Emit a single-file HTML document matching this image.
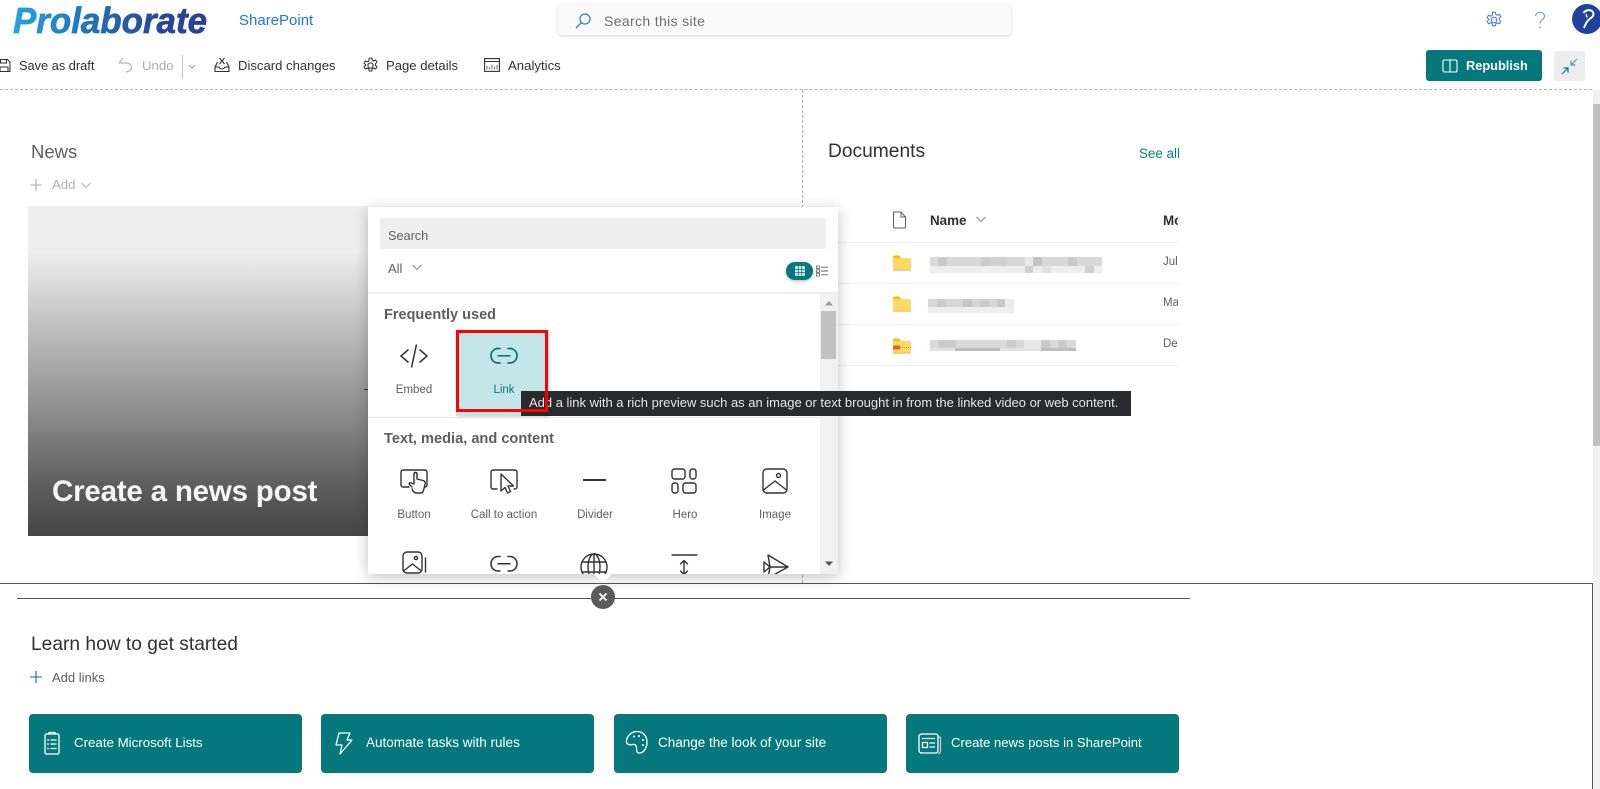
<!DOCTYPE html>
<html><head><meta charset="utf-8"><title>SharePoint</title>
<style>
html,body{margin:0;padding:0;background:#fff;overflow:hidden}
#p{position:relative;width:1600px;height:789px;overflow:hidden;font-family:"Liberation Sans",sans-serif;color:#323130}
.t{position:absolute;white-space:nowrap;line-height:20px;height:20px}
.a{position:absolute}
svg{position:absolute;overflow:visible}
.i{fill:none;stroke:#323130;stroke-width:1.4;stroke-linecap:round;stroke-linejoin:round}
.w{fill:none;stroke:#fff;stroke-width:1.3;stroke-linecap:round;stroke-linejoin:round}
.lb{font-size:11.5px;color:#605e5c;text-align:center;width:90px}
.btn{position:absolute;top:714px;height:59px;width:273px;background:#04787c;border-radius:4px}
.bt{position:absolute;top:19px;color:#fff;line-height:20px;white-space:nowrap}
</style></head><body><div id="p">

<!-- header -->
<svg style="left:0;top:0" width="220" height="44" viewBox="0 0 220 44"><defs><linearGradient id="lg" x1="13" x2="207" y1="0" y2="0" gradientUnits="userSpaceOnUse"><stop offset="0" stop-color="#27a3e0"/><stop offset=".35" stop-color="#1f78bd"/><stop offset=".75" stop-color="#27479b"/><stop offset="1" stop-color="#2a3f95"/></linearGradient></defs><text x="13" y="33" font-family="Liberation Sans" font-size="36" font-weight="bold" font-style="italic" fill="url(#lg)" stroke="url(#lg)" stroke-width=".7" textLength="194" lengthAdjust="spacingAndGlyphs">Prolaborate</text></svg>
<div class="t" style="left:239px;top:11px;font-size:15px;color:#1b7bd6">SharePoint</div>
<div class="a" style="left:558px;top:4px;width:453px;height:31px;background:#fafafa;border-radius:4px;box-shadow:0 1px 3px rgba(0,0,0,.18)"></div>
<svg style="left:574px;top:12px" width="18" height="18" viewBox="0 0 18 18"><circle cx="11" cy="7" r="5" fill="none" stroke="#3a78c4" stroke-width="1.2"/><path d="M7.400 10.600 2 16" stroke="#3a78c4" stroke-width="1.3" fill="none"/></svg>
<div class="t" style="left:604px;top:11px;font-size:14px;color:#706e6c;letter-spacing:.35px">Search this site</div>
<svg style="left:1485px;top:11px" width="18" height="18" viewBox="0 0 18 18"><circle cx="9" cy="9" r="2.800" fill="none" stroke="#4f7fd6" stroke-width="1.100"/><path d="M7.600 1.200h2.800l.4 2.200 1.600.8 2-1 1.500 2.400-1.700 1.500v1.800l1.700 1.500-1.500 2.400-2-1-1.600.8-.4 2.200H7.600l-.4-2.200-1.600-.8-2 1-1.500-2.400 1.700-1.500V8.100L2.100 6.600l1.500-2.400 2 1 1.600-.8z" fill="none" stroke="#4f7fd6" stroke-width="1.100" stroke-linejoin="round"/></svg>
<svg style="left:1533px;top:11px" width="14" height="20" viewBox="0 0 14 20"><path d="M2.500 5C2.800 2.500 4.800 1.200 7 1.200c2.500 0 4.500 1.700 4.500 4 0 3.300-4.300 3.500-4.300 7.300" fill="none" stroke="#6b9be6" stroke-width="1.200"/><circle cx="7.200" cy="16.500" r=".9" fill="#6b9be6"/></svg>
<div class="a" style="left:1572px;top:4px;width:30px;height:30px;border-radius:50%;background:#21429a"></div>
<svg style="left:1580px;top:8px" width="20" height="24" viewBox="0 0 20 24"><path d="M3.500 5C5 2.500 8.500 1.500 11 2.500c3 1.200 3 4.500 1.300 6.300C10.500 10.500 7 11.500 4 20" fill="none" stroke="#fff" stroke-width="2"/><path d="M6.500 6c-.5 1.500 0 2.800 1 3.300" fill="none" stroke="#fff" stroke-width="1.200"/></svg>

<!-- toolbar -->
<svg style="left:-3px;top:58px" width="14" height="15" viewBox="0 0 14 15"><path d="M1 1.500h9.500L13 4v9.500H1zM3.500 1.500V5h6V1.500M3 13.500V9h8v4.500" class="i" style="stroke-width:1.100"/></svg>
<div class="t" style="left:19px;top:56px;font-size:12.800px">Save as draft</div>
<svg style="left:118px;top:56px" width="16" height="18" viewBox="0 0 16 18"><path d="M1 7l4-5M1 7h7c4 0 6 2.500 5.500 5-.5 2.300-3 3.500-5.500 4" fill="none" stroke="#b5b3b1" stroke-width="1.200"/></svg>
<div class="t" style="left:142px;top:56px;font-size:13.200px;color:#b0aeac">Undo</div>
<div class="a" style="left:182px;top:55px;width:1px;height:24px;background:#c8c6c4"></div>
<svg style="left:187px;top:64px" width="10" height="6" viewBox="0 0 10 6"><path d="M2 1l3 3 3-3" fill="none" stroke="#a19f9d" stroke-width="1"/></svg>
<svg style="left:214px;top:57px" width="16" height="16" viewBox="0 0 16 16"><path d="M1 10l2.500-5M15 10l-2.500-5M1 10v4.500h14V10h-4c-.5 1.500-1.500 2-3 2s-2.500-.5-3-2zM5.500 1l5 6M10.500 1l-5 6" fill="none" stroke="#323130" stroke-width="1.100"/></svg>
<div class="t" style="left:238px;top:56px;font-size:13.100px">Discard changes</div>
<svg style="left:362px;top:57px" width="17" height="17" viewBox="0 0 18 18"><circle cx="9" cy="9" r="2.800" fill="none" stroke="#323130" stroke-width="1.100"/><path d="M7.600 1.200h2.800l.4 2.200 1.600.8 2-1 1.500 2.400-1.700 1.500v1.800l1.700 1.500-1.500 2.400-2-1-1.600.8-.4 2.200H7.600l-.4-2.200-1.600-.8-2 1-1.500-2.400 1.700-1.500V8.100L2.100 6.600l1.500-2.400 2 1 1.600-.8z" fill="none" stroke="#323130" stroke-width="1.100" stroke-linejoin="round"/></svg>
<div class="t" style="left:386px;top:56px;font-size:13.100px">Page details</div>
<svg style="left:484px;top:58px" width="16" height="14" viewBox="0 0 16 14"><rect x=".6" y=".6" width="14.800" height="12.800" fill="none" stroke="#323130" stroke-width="1.100"/><path d="M.6 3.500h14.800" stroke="#323130" stroke-width="1"/><path d="M3 11.500V8M5.500 11.500V9M8 11.500V6.500M10.500 11.500V8.500M13 11.500V7" stroke="#8a8886" stroke-width="1.200"/></svg>
<div class="t" style="left:508px;top:56px;font-size:13.200px">Analytics</div>
<div class="a" style="left:1426px;top:50px;width:116px;height:31px;background:#04787c;border-radius:3px"></div>
<svg style="left:1442px;top:59px" width="16" height="14" viewBox="0 0 16 14"><rect x="1" y="1" width="14" height="12" rx="1.500" fill="none" stroke="#fff" stroke-width="1.100"/><path d="M8 1v12" stroke="#fff" stroke-width="1.100"/></svg>
<div class="t" style="left:1466px;top:56px;font-size:12.800px;font-weight:bold;color:#fff">Republish</div>
<div class="a" style="left:1554px;top:51px;width:31px;height:30px;background:#ededed;border-radius:3px"></div>
<svg style="left:1561px;top:58px" width="17" height="17" viewBox="0 0 17 17"><path d="M16 1l-6 6M10 2.500V7h4.500" fill="none" stroke="#5a9a9c" stroke-width="1.200"/><path d="M1 16l6-6M2.500 10H7v4.500" fill="none" stroke="#04787c" stroke-width="1.200"/></svg>
<div class="a" style="left:0;top:89px;width:1592px;border-top:1px dashed #b5b5b5"></div>

<!-- page scrollbar -->
<div class="a" style="left:1593px;top:90px;width:7px;height:699px;background:#f1f1f1"></div>
<div class="a" style="left:1593px;top:104px;width:7px;height:342px;background:#c1c1c1"></div>
<div class="a" style="left:802px;top:90px;height:493px;border-left:1px dashed #b5b5b5"></div>

<!-- news -->
<div class="t" style="left:31px;top:142px;font-size:18.500px;color:#605e5c">News</div>
<svg style="left:29px;top:178px" width="14" height="14" viewBox="0 0 14 14"><path d="M7 1v12M1 7h12" stroke="#a6a6a6" stroke-width="1"/></svg>
<div class="t" style="left:52px;top:175px;font-size:13.200px;color:#b3b1af">Add</div>
<svg style="left:80px;top:182px" width="12" height="7" viewBox="0 0 12 7"><path d="M1.500 1l4.500 4.500L10.500 1" fill="none" stroke="#b3b1af" stroke-width="1"/></svg>
<div class="a" style="left:28px;top:206px;width:342px;height:330px;background:linear-gradient(180deg,#eeeeee 0,#eeeeee 14%,#bdbdbd 38%,#8e8e8e 62%,#5f5f5f 84%,#454545 100%)"></div>
<div class="t" style="left:52px;top:474px;height:36px;line-height:36px;font-size:29.500px;font-weight:bold;color:#f6f6f6;letter-spacing:-.2px">Create a news post</div>
<div class="a" style="left:364px;top:389px;width:6px;height:1px;background:#333"></div>

<!-- documents -->
<div class="t" style="left:828px;top:142px;font-size:19.200px">Documents</div>
<div class="t" style="left:1139px;top:144px;font-size:13.400px;color:#038387">See all</div>
<svg style="left:892px;top:211px" width="15" height="18" viewBox="0 0 15 18"><path d="M1.500 1h7.500l4.500 5v9.500c0 1-.5 1.500-1.500 1.500H3c-1 0-1.500-.5-1.500-1.500zM9 1v5h4.500" fill="none" stroke="#605e5c" stroke-width="1"/></svg>
<div class="t" style="left:930px;top:211px;font-size:13.400px;font-weight:bold;color:#323130">Name</div>
<svg style="left:975px;top:216px" width="12" height="7" viewBox="0 0 12 7"><path d="M1.500 1l4.500 4.500L10.500 1" fill="none" stroke="#8a8886" stroke-width="1"/></svg>
<div class="a" style="left:838px;top:205px;width:340px;height:165px;overflow:hidden">
 <div class="t" style="left:325px;top:6px;font-size:13.400px;font-weight:bold">Mo</div>
 <div class="t" style="left:325px;top:47px;font-size:11.500px;color:#605e5c">July</div>
 <div class="t" style="left:325px;top:88px;font-size:11.500px;color:#605e5c">March</div>
 <div class="t" style="left:325px;top:129px;font-size:11.500px;color:#605e5c">December</div>
</div>
<div class="a" style="left:838px;top:242px;width:340px;height:1px;background:#eeeeee"></div>
<div class="a" style="left:838px;top:283px;width:340px;height:1px;background:#eeeeee"></div>
<div class="a" style="left:838px;top:324px;width:340px;height:1px;background:#eeeeee"></div>
<div class="a" style="left:838px;top:365px;width:340px;height:1px;background:#eeeeee"></div>
<svg style="left:893px;top:255px" width="18" height="16" viewBox="0 0 18 16"><path d="M0 2c0-1 .5-1.500 1.500-1.500H6L8 3H0z" fill="#ffb900"/><path d="M0 3h16.500c1 0 1.500.5 1.500 1.500V14c0 1-.5 1.500-1.500 1.500h-15C.5 15.500 0 15 0 14z" fill="#ffd966"/><path d="M0 14.700h18v.8H0z" fill="#e0a830"/></svg>
<svg style="left:893px;top:296px" width="18" height="16" viewBox="0 0 18 16"><path d="M0 2c0-1 .5-1.500 1.500-1.500H6L8 3H0z" fill="#ffb900"/><path d="M0 3h16.500c1 0 1.500.5 1.500 1.500V14c0 1-.5 1.500-1.500 1.500h-15C.5 15.500 0 15 0 14z" fill="#ffd966"/><path d="M0 14.700h18v.8H0z" fill="#e0a830"/></svg>
<svg style="left:893px;top:338px" width="18" height="16" viewBox="0 0 18 16"><path d="M0 2c0-1 .5-1.500 1.500-1.500H6L8 3H0z" fill="#ffb900"/><path d="M0 3h16.500c1 0 1.500.5 1.500 1.500V14c0 1-.5 1.500-1.500 1.500h-15C.5 15.500 0 15 0 14z" fill="#ffd966"/><rect x="0" y="7.500" width="7" height="4" fill="#d9641e"/><path d="M7 9.500h11" stroke="#c8951f" stroke-width="1" stroke-dasharray="1 1"/><path d="M0 14.700h18v.8H0z" fill="#e0a830"/></svg>
<svg style="left:925px;top:255px" width="180" height="100" viewBox="925 255 180 100" shape-rendering="crispEdges">
<rect x="930" y="257" width="172" height="9" fill="#d8d8d8"/><rect x="930" y="266" width="172" height="7" fill="#eeeeee"/>
<rect x="938" y="257" width="9" height="9" fill="#c8c8c8"/><rect x="981" y="257" width="9" height="9" fill="#cccccc"/><rect x="990" y="257" width="17" height="9" fill="#d0d0d0"/><rect x="1033" y="257" width="9" height="9" fill="#c4c4c4"/><rect x="1068" y="257" width="9" height="9" fill="#cacaca"/><rect x="1025" y="257" width="8" height="9" fill="#e8e8e8"/><rect x="1025" y="266" width="8" height="7" fill="#cfcfcf"/><rect x="1085" y="266" width="9" height="7" fill="#cfcfcf"/><rect x="1042" y="266" width="9" height="7" fill="#e0e0e0"/>
<rect x="928" y="299" width="86" height="8" fill="#d6d6d6"/><rect x="928" y="307" width="86" height="6" fill="#eeeeee"/>
<rect x="937" y="299" width="9" height="8" fill="#cccccc"/><rect x="963" y="299" width="9" height="8" fill="#c8c8c8"/><rect x="980" y="299" width="9" height="8" fill="#cccccc"/><rect x="997" y="299" width="8" height="8" fill="#c8c8c8"/><rect x="1005" y="299" width="9" height="8" fill="#ebebeb"/>
<rect x="930" y="340" width="146" height="8" fill="#d9d9d9"/><rect x="930" y="348" width="146" height="3" fill="#e2e2e2"/>
<rect x="938" y="340" width="18" height="8" fill="#cccccc"/><rect x="955" y="348" width="45" height="3" fill="#bbbbbb"/><rect x="1007" y="340" width="9" height="8" fill="#cacaca"/><rect x="1024" y="340" width="17" height="8" fill="#e8e8e8"/><rect x="1041" y="340" width="9" height="8" fill="#cacaca"/><rect x="1058" y="340" width="9" height="8" fill="#cccccc"/><rect x="1041" y="348" width="35" height="3" fill="#bebebe"/>
</svg>

<!-- section lines -->
<div class="a" style="left:0;top:583px;width:1592px;height:1px;background:#555"></div>
<div class="a" style="left:1592px;top:583px;width:1px;height:206px;background:#555"></div>
<div class="a" style="left:17px;top:598px;width:1173px;height:1px;background:#555"></div>

<!-- learn -->
<div class="t" style="left:31px;top:635px;font-size:19.200px">Learn how to get started</div>
<svg style="left:29px;top:670px" width="14" height="14" viewBox="0 0 14 14"><path d="M7 1v12M1 7h12" stroke="#04787c" stroke-width="1.100"/></svg>
<div class="t" style="left:52px;top:668px;font-size:13px;color:#605e5c">Add links</div>

<div class="btn" style="left:29px"><div class="bt" style="left:45px;font-size:13.300px">Create Microsoft Lists</div>
<svg style="left:14px;top:17px" width="18" height="25" viewBox="0 0 18 25"><rect x="2" y="3" width="14" height="20" rx="1.500" class="w"/><path d="M6 3V1.500h6V3" class="w"/><path d="M8 9h5M8 13h5M8 17.500h5M4.500 9h1M4.500 13h1M4.500 17.500h1" class="w"/></svg></div>
<div class="btn" style="left:321px"><div class="bt" style="left:45px;font-size:13.500px">Automate tasks with rules</div>
<svg style="left:13px;top:17px" width="20" height="25" viewBox="0 0 20 25"><path d="M5 2h11l-3 7h5L6 23l2-9H2z" class="w"/></svg></div>
<div class="btn" style="left:614px"><div class="bt" style="left:44px;font-size:13.500px">Change the look of your site</div>
<svg style="left:11px;top:16px" width="24" height="25" viewBox="0 0 24 25"><path d="M12 1.500c6 0 10 4.500 10 10.500 0 6-3.500 11-7.500 11-3 0-3-2.500-3-5 0-3-2-4-4-3.500S2 15 1.500 12C1 7 6 1.500 12 1.500z" class="w"/><circle cx="9" cy="6.500" r="1" fill="#fff"/><circle cx="14" cy="6" r="1" fill="#fff"/><circle cx="18" cy="10" r="1" fill="#fff"/><circle cx="18" cy="15" r="1" fill="#fff"/></svg></div>
<div class="btn" style="left:906px"><div class="bt" style="left:45px;font-size:13.100px">Create news posts in SharePoint</div>
<svg style="left:12px;top:19px" width="23" height="21" viewBox="0 0 23 21"><path d="M20 4h1.500c.7 0 1 .5 1 1v13c0 1.500-1 2.500-2.500 2.500" fill="none" stroke="#e8c8c0" stroke-width="1.200"/><rect x="1" y="1" width="19" height="19" rx="2.500" class="w"/><path d="M4.500 5.500h12M12 10h4.500M12 14h4.500" class="w"/><rect x="4.500" y="9.500" width="5" height="5" class="w"/></svg></div>

<!-- popup -->
<div class="a" style="left:368px;top:207px;width:470px;height:367px;background:#fff;box-shadow:0 3px 14px rgba(0,0,0,.24);overflow:hidden">
 <div class="a" style="left:12px;top:11px;width:446px;height:31px;background:#efefef;border-radius:2px"></div>
 <div class="t" style="left:20px;top:19px;font-size:12.700px;color:#605e5c">Search</div>
 <div class="t" style="left:20px;top:52px;font-size:13px;color:#605e5c">All</div>
 <svg style="left:43px;top:57px" width="12" height="7" viewBox="0 0 12 7"><path d="M1.500 1l4.500 4.500L10.500 1" fill="none" stroke="#8a8886" stroke-width="1"/></svg>
 <div class="a" style="left:418px;top:55px;width:27px;height:18px;border-radius:9px;background:#04787c;box-shadow:0 1px 3px rgba(0,0,0,.3)"></div>
 <svg style="left:426px;top:58px" width="12" height="12" viewBox="0 0 12 12"><rect x="1" y="1" width="10" height="10" rx="1.500" fill="#d8efef"/><path d="M4.300 1v10M7.700 1v10M1 4.300h10M1 7.700h10" stroke="#04787c" stroke-width=".8"/></svg>
 <svg style="left:448px;top:58px" width="12" height="12" viewBox="0 0 12 12"><path d="M.5 1h3v2.500h-3zM.5 4.800h3v2.500h-3zM.5 8.500h3V11h-3z" fill="none" stroke="#605e5c" stroke-width=".8"/><path d="M5 2.200h7M5 6h7M5 9.800h7" stroke="#605e5c" stroke-width=".9"/></svg>
 <div class="a" style="left:0;top:85px;width:470px;height:2px;background:#eeeeee"></div>
 <!-- scrollbar -->
 <div class="a" style="left:452px;top:87px;width:18px;height:280px;background:#f1f1f1"></div>
 <div class="a" style="left:453px;top:104px;width:15px;height:48px;background:#c1c1c1"></div>
 <svg style="left:456px;top:93px" width="10" height="6" viewBox="0 0 10 6"><path d="M1 5.500L5 1l4 4.500z" fill="#9a9a9a"/></svg>
 <svg style="left:456px;top:354px" width="10" height="6" viewBox="0 0 10 6"><path d="M1 .5L5 5l4-4.500z" fill="#555"/></svg>

 <div class="t" style="left:16px;top:98px;font-size:14.500px;font-weight:bold;color:#605e5c">Frequently used</div>
 <!-- Embed -->
 <svg style="left:31px;top:136px" width="30" height="26" viewBox="0 0 30 26"><path d="M9.500 6.500L2 13l7.500 6.500M20.500 6.500L28 13l-7.500 6.500M17.500 1.500l-5 23" fill="none" stroke="#323130" stroke-width="1.500"/></svg>
 <div class="t lb" style="left:1px;top:173px">Embed</div>
 <!-- Link tile -->
 <div class="a" style="left:88px;top:123px;width:92px;height:86px;background:#c3e7e8;box-shadow:1px 1px 3px rgba(0,0,0,.2)"></div>
 <svg style="left:121px;top:139px" width="30" height="20" viewBox="0 0 30 20"><path d="M11 2.500H9c-4 0-7 3.200-7 7.200s3 7.300 7 7.300h2M19 2.500h2c4 0 7 3.200 7 7.200s-3 7.300-7 7.300h-2M9 9.800h12" fill="none" stroke="#04787c" stroke-width="1.700" stroke-linecap="round"/></svg>
 <div class="t lb" style="left:91px;top:173px;color:#04787c">Link</div>
 <div class="a" style="left:0;top:210px;width:452px;height:1px;background:#e6e6e6"></div>

 <div class="t" style="left:16px;top:222px;font-size:14.600px;font-weight:bold;color:#605e5c">Text, media, and content</div>
 <!-- Row 2 -->
 <svg style="left:32px;top:262px" width="28" height="26" viewBox="0 0 28 26"><path d="M9 18H3c-1 0-2-1-2-2V3c0-1 1-2 2-2h22c1 0 2 1 2 2v13c0 1-1 2-2 2" class="i"/><path d="M12 18l-3-3 1-1.500 4 1.500V5c0-2 3-2 3 0v5l6 1.500c2 .5 2.500 2 2 4l-1.500 6c-.5 1.500-1.500 2.500-3 2.500h-4c-1.500 0-2.500-.8-3.500-2l-1-2" class="i"/></svg>
 <div class="t lb" style="left:1px;top:298px">Button</div>
 <svg style="left:122px;top:262px" width="28" height="26" viewBox="0 0 28 26"><path d="M7 20H3c-1 0-2-1-2-2V3c0-1 1-2 2-2h22c1 0 2 1 2 2v15c0 1-1 2-2 2h-1" class="i"/><path d="M11 5v17l4-3.500 2.500 5.500 3-1.500-2.500-5.500h5.500z" class="i"/></svg>
 <div class="t lb" style="left:91px;top:298px">Call to action</div>
 <div class="a" style="left:215px;top:272px;width:23px;height:2px;background:#323130"></div>
 <div class="t lb" style="left:182px;top:298px">Divider</div>
 <svg style="left:303px;top:261px" width="26" height="26" viewBox="0 0 26 26"><rect x="1" y="1" width="13" height="10" rx="2.500" class="i"/><rect x="19" y="1" width="6" height="10" rx="2.500" class="i"/><rect x="1" y="15" width="6" height="10" rx="2.500" class="i"/><rect x="12" y="15" width="13" height="10" rx="2.500" class="i"/></svg>
 <div class="t lb" style="left:272px;top:298px">Hero</div>
 <svg style="left:394px;top:261px" width="26" height="26" viewBox="0 0 26 26"><rect x="1" y="1" width="24" height="24" rx="4" class="i"/><circle cx="16.500" cy="7.500" r="2" class="i"/><path d="M1.500 22L13 13l11.500 9" class="i"/></svg>
 <div class="t lb" style="left:362px;top:298px">Image</div>
 <!-- Row 3 -->
 <svg style="left:34px;top:344px" width="26" height="26" viewBox="0 0 26 26"><rect x="1" y="1" width="19" height="21" rx="4" class="i"/><circle cx="14" cy="7" r="1.600" class="i"/><path d="M1.500 20L10.500 13l9 7M23.500 7v14" class="i"/></svg>
 <svg style="left:121px;top:347px" width="30" height="20" viewBox="0 0 30 20"><path d="M11 2.500H9c-4 0-7 3.200-7 7.200s3 7.300 7 7.300h2M19 2.500h2c4 0 7 3.200 7 7.200s-3 7.300-7 7.300h-2M9 9.800h12" fill="none" stroke="#323130" stroke-width="1.500" stroke-linecap="round"/></svg>
 <svg style="left:211px;top:345px" width="30" height="30" viewBox="0 0 30 30"><circle cx="15" cy="15" r="13" class="i"/><ellipse cx="15" cy="15" rx="6" ry="13" class="i"/><path d="M3 10h24M3 20h24M15 2v26" class="i"/></svg>
 <svg style="left:303px;top:347px" width="26" height="26" viewBox="0 0 26 26"><path d="M1 1h25M13 6.500v14M9.500 10l3.500-3.500 3.500 3.500M9.500 17l3.500 3.500 3.500-3.500" class="i"/></svg>
 <svg style="left:395px;top:347px" width="26" height="28" viewBox="0 0 26 28"><path d="M5 1l20 12L5 24l2-11zM7 13H25M7 13L1 8v10z" class="i"/></svg>
</div>

<!-- notch & close -->
<div class="a" style="left:594px;top:574px;width:0;height:0;border-left:9px solid transparent;border-right:9px solid transparent;border-top:9px solid #fff"></div>
<div class="a" style="left:591px;top:585px;width:24px;height:24px;border-radius:50%;background:#5a5a5a"></div>
<svg style="left:598px;top:592px" width="10" height="10" viewBox="0 0 10 10"><path d="M1.500 1.500l7 7M8.500 1.500l-7 7" stroke="#fff" stroke-width="1.800"/></svg>

<!-- tooltip -->
<div class="a" style="left:521px;top:391px;width:610px;height:25px;background:#292a2e"></div>
<div class="t" style="left:529px;top:393px;font-size:13px;color:#e6e6e6;letter-spacing:-.01px">Add a link with a rich preview such as an image or text brought in from the linked video or web content.</div>
<!-- red box -->
<div class="a" style="left:456px;top:330px;width:86px;height:76px;border:3px solid #f00"></div>
</div></body></html>
